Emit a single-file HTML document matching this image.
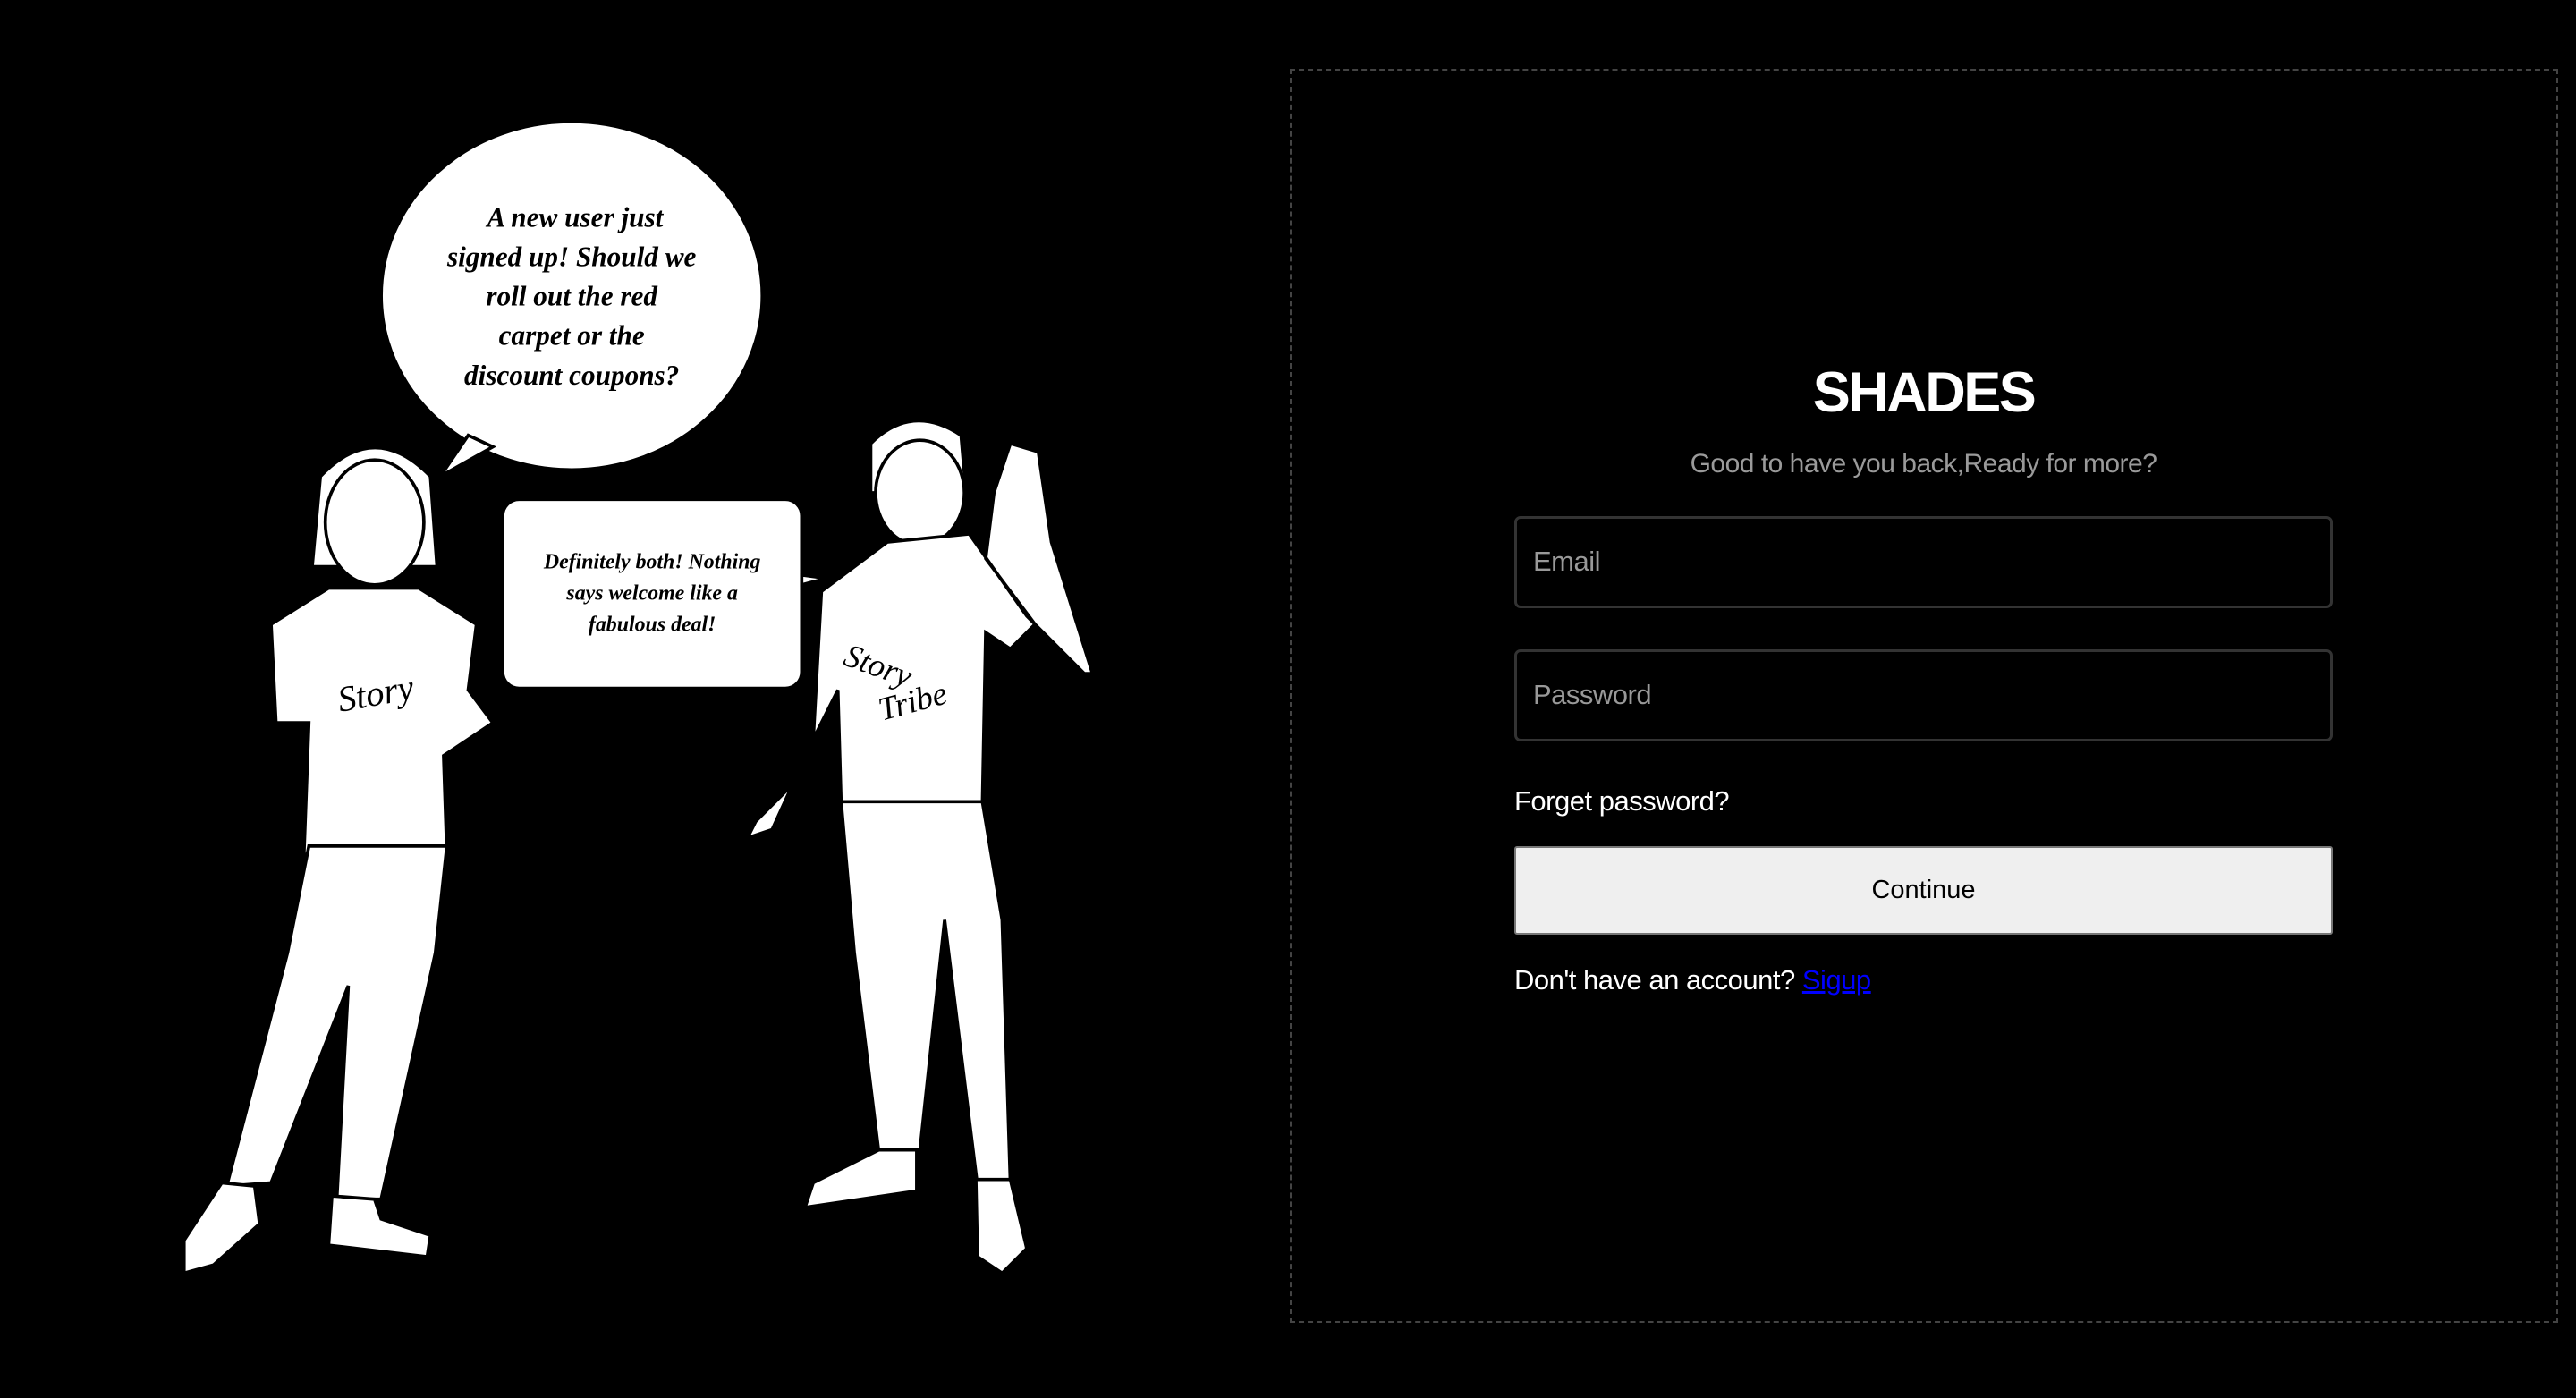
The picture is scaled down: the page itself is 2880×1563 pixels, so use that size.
<!DOCTYPE html>
<html><head><meta charset="utf-8"><style>
html,body{margin:0;padding:0;background:#000;width:2880px;height:1563px;overflow:hidden;font-family:"Liberation Sans",sans-serif}
.box{position:absolute;left:1442px;top:77px;width:1414px;height:1398px;border:2px dashed #444}
.title{position:absolute;left:1693px;width:915px;top:403px;text-align:center;color:#fff;font-size:63px;font-weight:bold;letter-spacing:-2.5px}
.sub{position:absolute;left:1693px;width:915px;top:502px;text-align:center;color:#9a9a9a;font-size:30px;letter-spacing:-0.5px}
.inp{position:absolute;left:1693px;width:909px;height:97px;border:3px solid #333;border-radius:7px;box-sizing:content-box}
.inp span{position:absolute;left:18px;top:30px;font-size:31px;color:#999;letter-spacing:-0.5px}
.fp{position:absolute;left:1693px;top:878px;color:#fff;font-size:31px;letter-spacing:-0.5px}
.btn{position:absolute;left:1693px;top:946px;width:911px;height:95px;background:#efefef;border:2px solid #777;border-radius:3px;text-align:center;line-height:95px;font-size:29px;color:#000}
.acc{position:absolute;left:1693px;top:1078px;color:#fff;font-size:31px;letter-spacing:-0.5px}
.acc a{color:#00f;text-decoration:underline}
svg{position:absolute;left:0;top:0}
</style></head><body>
<svg width="1440" height="1563" viewBox="0 0 784 851">
<g fill="#fff" stroke="#000" stroke-width="2">
<ellipse cx="348" cy="180" rx="116" ry="106"/>
<path d="M285 265 L268 290 L300 272 Z"/>
<rect x="306" y="304" width="182" height="115" rx="10"/>
<path d="M488 350 L503 352 L488 356 Z"/>
</g>
<g font-family="Liberation Serif,serif" font-style="italic" font-weight="bold" text-anchor="middle" fill="#000">
<text x="350" y="138" font-size="17">A new user just</text>
<text x="348" y="162" font-size="17">signed up! Should we</text>
<text x="348" y="186" font-size="17">roll out the red</text>
<text x="348" y="210" font-size="17">carpet or the</text>
<text x="348" y="234" font-size="17">discount coupons?</text>
<text x="397" y="346" font-size="13">Definitely both! Nothing</text>
<text x="397" y="365" font-size="13">says welcome like a</text>
<text x="397" y="384" font-size="13">fabulous deal!</text>
</g>
<g fill="#fff" stroke="#000" stroke-width="2">
<path d="M195 290 Q228 255 262 290 L266 345 L190 345 Z"/>
<ellipse cx="228" cy="318" rx="30" ry="38"/>
<path d="M200 358 L255 358 L290 380 L285 420 L300 440 L270 460 L272 520 L185 520 L188 440 L168 440 L165 380 Z"/>
<path d="M188 515 L272 515 L265 580 L232 730 L205 730 L212 600 L165 720 L138 722 L175 580 Z"/>
<path d="M135 720 L155 722 L158 745 L130 770 L112 775 L112 755 Z"/>
<path d="M202 728 L228 730 L232 742 L262 752 L260 765 L200 758 Z"/>
<path d="M530 270 Q555 245 585 265 L588 300 L530 300 Z"/>
<ellipse cx="560" cy="300" rx="27" ry="32"/>
<path d="M540 330 L590 325 L625 375 L660 410 L665 410 L640 330 L632 275 L615 270 L605 300 L600 340 L630 380 L615 395 L600 385 L598 490 L512 490 L510 420 L480 480 L460 500 L455 510 L470 505 L495 450 L500 360 Z"/>
<path d="M512 488 L598 488 L610 560 L615 720 L595 722 L575 560 L560 700 L535 702 L520 580 Z"/>
<path d="M535 700 L558 700 L558 725 L490 735 L495 720 Z"/>
<path d="M594 718 L615 718 L625 760 L610 775 L595 765 Z"/>
</g>
<g font-family="Liberation Serif,serif" font-style="italic" fill="#000">
<text x="205" y="430" font-size="22" transform="rotate(-10 225 420)">Story</text>
<text x="515" y="410" font-size="20" transform="rotate(20 530 400)">Story</text>
<text x="535" y="435" font-size="20" transform="rotate(-15 550 430)">Tribe</text>
</g>
</svg>
<div class="box"></div>
<div class="title">SHADES</div>
<div class="sub">Good to have you back,Ready for more?</div>
<div class="inp" style="top:577px"><span>Email</span></div>
<div class="inp" style="top:726px"><span>Password</span></div>
<div class="fp">Forget password?</div>
<div class="btn">Continue</div>
<div class="acc">Don't have an account? <a>Sigup</a></div>
</body></html>
